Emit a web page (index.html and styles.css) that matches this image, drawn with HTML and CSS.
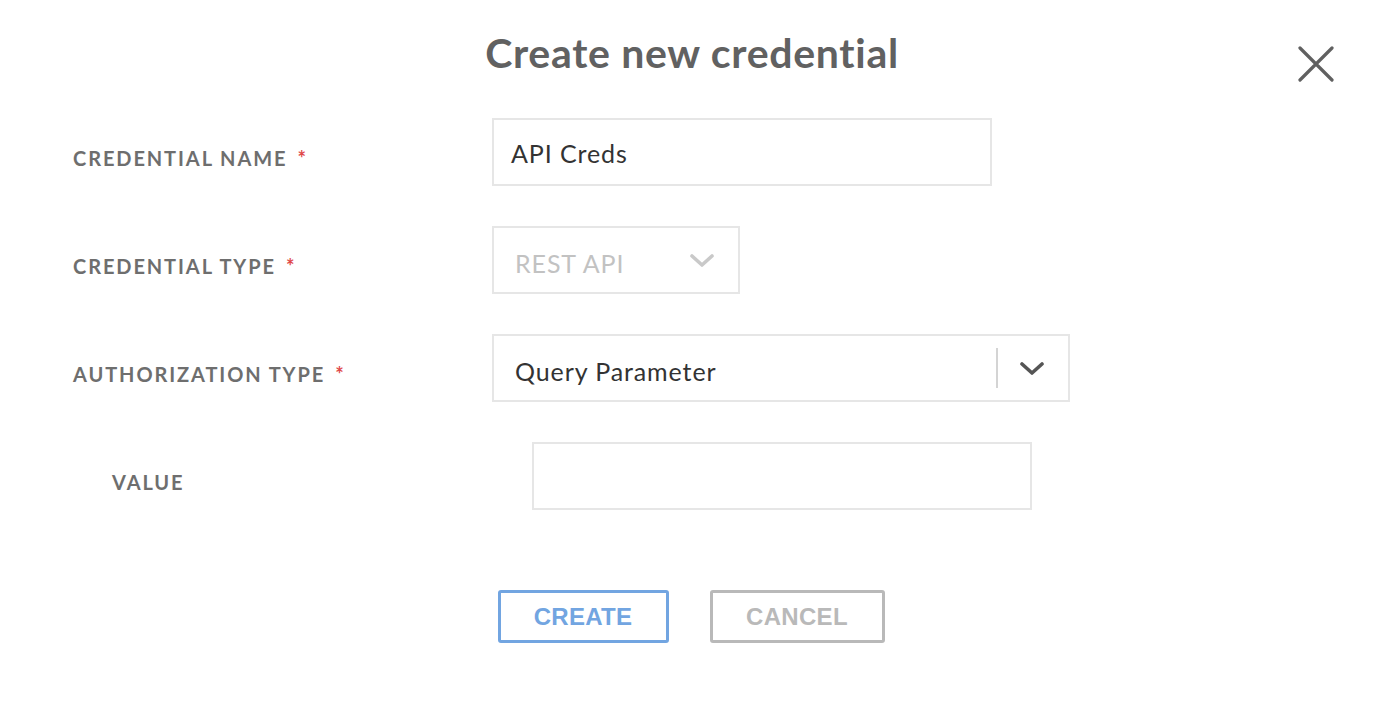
FILE: index.html
```html
<!DOCTYPE html>
<html>
<head>
<meta charset="utf-8">
<link rel="stylesheet" href="styles.css">
</head>
<body>
<div class="modal">
  <header class="modal-header">
    <h1 class="title">Create new credential</h1>
    <button class="close" aria-label="Close">
      <svg width="36" height="36" viewBox="0 0 36 36"><path d="M2 2 L34 34 M34 2 L2 34" stroke="#606060" stroke-width="3.2" stroke-linecap="round" fill="none"/></svg>
    </button>
  </header>
  <form class="form">
    <div class="row">
      <label class="label">CREDENTIAL NAME<span class="req">*</span></label>
      <div class="field input-name"><span class="val">API Creds</span></div>
    </div>
    <div class="row">
      <label class="label">CREDENTIAL TYPE<span class="req">*</span></label>
      <div class="field select-type">
        <span class="val muted">REST API</span>
        <svg class="chev" width="24" height="14" viewBox="0 0 24 14"><path d="M2 2 L12 11 L22 2" stroke="#c9c9c9" stroke-width="3.6" fill="none" stroke-linecap="round" stroke-linejoin="round"/></svg>
      </div>
    </div>
    <div class="row">
      <label class="label">AUTHORIZATION TYPE<span class="req">*</span></label>
      <div class="field select-auth">
        <span class="val dark">Query Parameter</span>
        <span class="divider"></span>
        <svg class="chev2" width="24" height="14" viewBox="0 0 24 14"><path d="M2 2 L12 11 L22 2" stroke="#555" stroke-width="3.6" fill="none" stroke-linecap="round" stroke-linejoin="round"/></svg>
      </div>
    </div>
    <div class="row sub">
      <label class="label">VALUE</label>
      <div class="field input-value"></div>
    </div>
  </form>
  <div class="actions">
    <button class="btn btn-create">CREATE</button>
    <button class="btn btn-cancel">CANCEL</button>
  </div>
</div>
</body>
</html>
```

FILE: styles.css
```css
* { box-sizing: border-box; }
html, body { margin: 0; padding: 0; background: #fff; }
body { font-family: Lato, "Open Sans", sans-serif; width: 1374px; height: 724px; overflow: hidden; }

.modal { position: relative; }

.modal-header {
  display: flex;
  justify-content: center;
  padding: 29px 0 0 10px;
  height: 118px;
}
.title {
  margin: 0;
  font-size: 41px;
  line-height: 48px;
  font-weight: 700;
  color: #616161;
  letter-spacing: 0.7px;
}
.close {
  position: absolute;
  top: 46px;
  right: 40px;
  width: 36px;
  height: 36px;
  padding: 0;
  border: 0;
  background: none;
}
.close svg { display: block; }

.form {
  display: flex;
  flex-direction: column;
  gap: 40px;
  padding-left: 73px;
}
.row {
  display: grid;
  grid-template-columns: 419px auto;
  align-items: center;
  height: 68px;
}
.row.sub { padding-left: 39px; grid-template-columns: 420px auto; }

.label {
  padding-top: 12px;
  font-size: 20px;
  font-weight: 700;
  color: #6e6e6e;
  letter-spacing: 1.9px;
}
.req { color: #e0494a; margin-left: 10px; }

.field {
  height: 68px;
  border: 2px solid #e6e6e6;
  background: #fff;
  display: flex;
  align-items: center;
}
.val { font-size: 25px; color: #333; letter-spacing: 0.9px; padding-top: 2px; }
.val.muted { color: #c2c2c2; }
.val.dark { color: #333; padding-top: 6px; }

.input-name { width: 500px; padding-left: 17px; }
.select-type { width: 248px; padding-left: 21px; }
.select-type .val { padding-top: 6px; }
.select-type .chev { margin-left: auto; margin-right: 24px; margin-top: 2px; }
.select-auth { width: 578px; padding-left: 21px; }
.select-auth .divider { margin-left: auto; width: 2px; height: 40px; background: #d4d4d4; }
.select-auth .chev2 { margin: 2px 24px 0 22px; }
.input-value { width: 500px; }

.actions {
  display: flex;
  justify-content: center;
  gap: 41px;
  padding: 80px 0 0 8px;
}
.btn {
  height: 53px;
  border-radius: 3px;
  background: #fff;
  font-family: "Liberation Sans", Arial, sans-serif;
  font-weight: 700;
  font-size: 24px;
  padding: 0;
  letter-spacing: 0.3px;
}
.btn-create { width: 171px; border: 3px solid #72a5e1; color: #72a5e1; }
.btn-cancel { width: 175px; border: 3px solid #b9b9b9; color: #b9b9b9; }
```
